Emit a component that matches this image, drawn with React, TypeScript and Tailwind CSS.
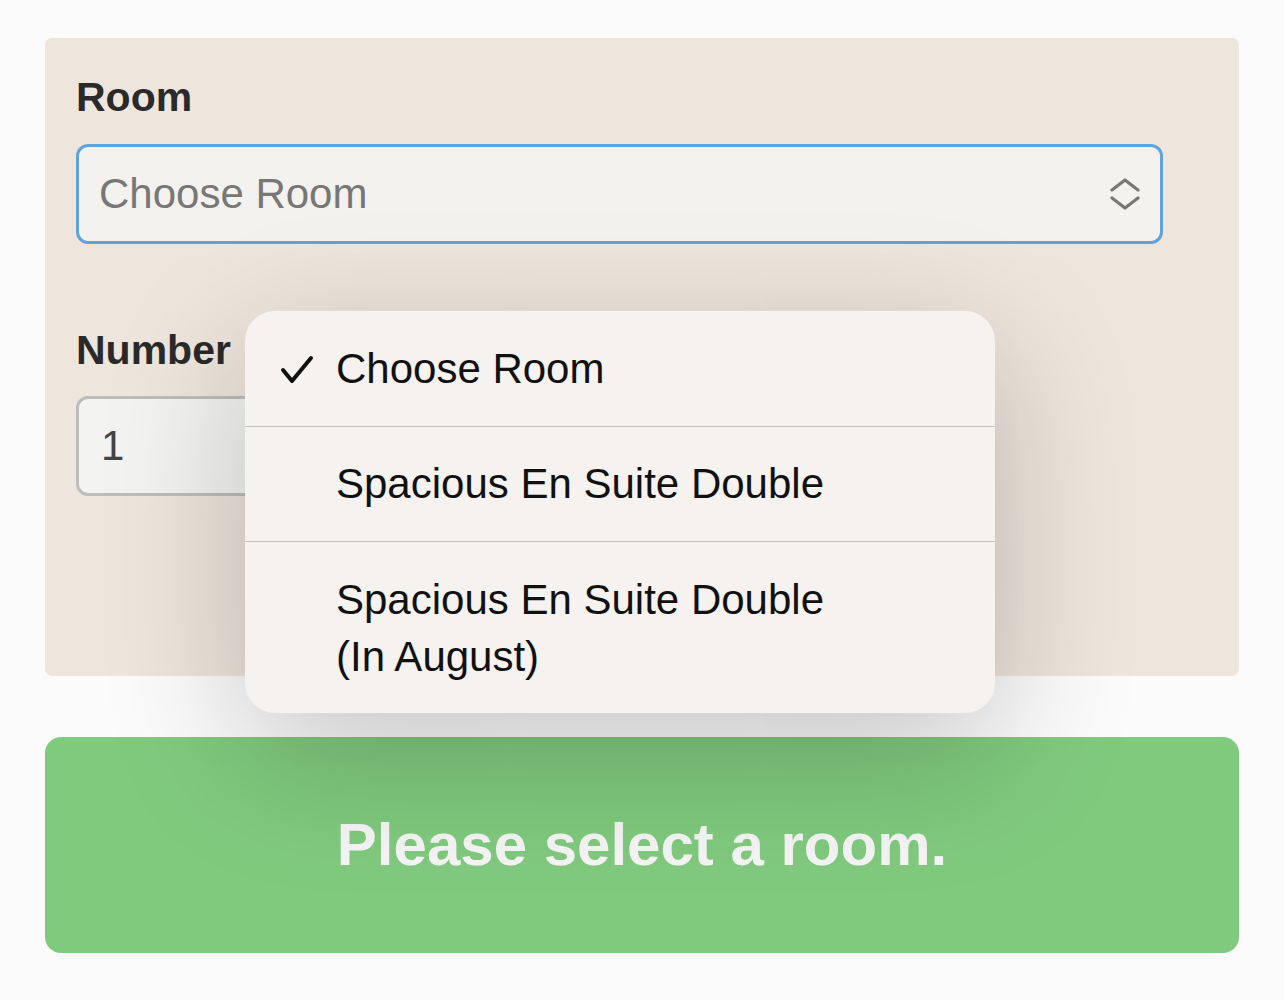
import React from "react";

const sans = { fontFamily: '"Liberation Sans", Arial, sans-serif' };

export default function App() {
  return (
    <div className="relative min-h-[1000px] w-[1284px] bg-[#fbfbfb] px-[45px] pt-[38px]" style={sans}>
      <div className="rounded-[7px] bg-[#eee5dc] pl-[31px] pr-[76px] pt-[39px] pb-[180px]">
        <div className="text-[41px] font-bold leading-[41px] text-[#2a2a2a]">Room</div>
        <div className="mt-[26px] flex h-[100px] items-center justify-between rounded-[12px] border-[3px] border-[#5ea3db] bg-[#f3f2ef] pl-[20px] pr-[20px]">
          <span className="text-[42px] leading-none text-[#777]">Choose Room</span>
          <svg width="30" height="36" viewBox="0 0 30 36" fill="none" stroke="#777" strokeWidth="3.2" strokeLinecap="round" strokeLinejoin="round">
            <path d="M2 14 L15 4 L28 14" />
            <path d="M2 22 L15 32 L28 22" />
          </svg>
        </div>
        <div className="mt-[86px] text-[41px] font-bold leading-[41px] text-[#2a2a2a]">Number</div>
        <div className="mt-[25px] flex h-[100px] w-[320px] items-center rounded-[12px] border-[3px] border-[#bdbdbd] bg-[#f3f3f2] pl-[22px]">
          <span className="text-[42px] leading-none text-[#444]">1</span>
        </div>
      </div>

      <div className="mt-[61px] flex h-[216px] items-center justify-center rounded-[16px] bg-[#80ca7e]">
        <span className="text-[60px] font-bold leading-none text-[#f5f5f5]">Please select a room.</span>
      </div>

      <div className="absolute left-[245px] top-[311px] z-10 w-[750px] overflow-hidden rounded-[30px] bg-[#f5f2ef] shadow-[0_40px_140px_rgba(0,0,0,0.22)]">
        <div className="relative flex h-[115px] items-center pl-[91px]">
          <svg className="absolute left-[35px] top-[44px]" width="34" height="30" viewBox="0 0 34 30" fill="none" stroke="#111" strokeWidth="4" strokeLinecap="round" strokeLinejoin="round">
            <path d="M3 15 L12 26 L31 3" />
          </svg>
          <span className="text-[42px] leading-none text-[#111]">Choose Room</span>
        </div>
        <div className="h-px bg-[#c4c0bc]" />
        <div className="flex h-[114px] items-center pl-[91px]">
          <span className="text-[42px] leading-none text-[#111]">Spacious En Suite Double</span>
        </div>
        <div className="h-px bg-[#c4c0bc]" />
        <div className="flex h-[171px] items-center pl-[91px]">
          <span className="text-[42px] leading-[57px] text-[#111]">
            Spacious En Suite Double
            <br />
            (In August)
          </span>
        </div>
      </div>
    </div>
  );
}
